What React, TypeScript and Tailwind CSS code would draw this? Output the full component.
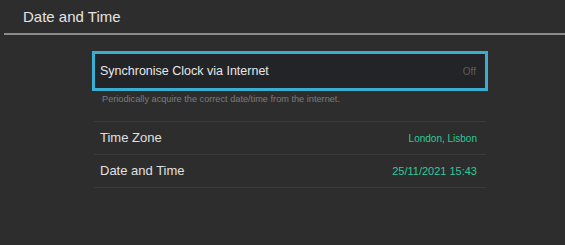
import React from "react";

export default function App() {
  return (
    <div
      className="w-[565px] h-[245px] bg-[#2d2d2d] overflow-hidden"
      style={{ fontFamily: '"Liberation Sans", Arial, sans-serif' }}
    >
      <div className="h-[33px] pl-[23px] flex items-center">
        <span className="text-[15px] text-[#e4e4e4] leading-none">Date and Time</span>
      </div>
      <div className="ml-[4px] h-[2px] bg-[#8a8a8a]" />
      <div className="ml-[92px] w-[396px] mt-[16px]">
        <div className="h-[40px] border-[3px] border-[#3aaed0] bg-[#222427] flex items-center justify-between pl-[5px] pr-[9px]">
          <span className="text-[12.5px] text-[#e8e8e8]">Synchronise Clock via Internet</span>
          <span className="text-[10px] text-[#5e5e5e]">Off</span>
        </div>
        <div className="pl-[10px] pt-[2px] text-[9.2px] text-[#7c7c7c] leading-[12px]">
          Periodically acquire the correct date/time from the internet.
        </div>
        <div className="mt-[16px] mx-[2px] border-t border-[#3a3a3a]">
          <div className="h-[33px] flex items-center justify-between pl-[6px] pr-[9px] border-b border-[#3a3a3a]">
            <span className="text-[13px] text-[#e0e0e0]">Time Zone</span>
            <span className="text-[10px] text-[#2fc99a]">London, Lisbon</span>
          </div>
          <div className="h-[33px] flex items-center justify-between pl-[6px] pr-[9px] border-b border-[#3a3a3a]">
            <span className="text-[13px] text-[#e0e0e0]">Date and Time</span>
            <span className="text-[11px] text-[#2fc99a]">25/11/2021 15:43</span>
          </div>
        </div>
      </div>
    </div>
  );
}
